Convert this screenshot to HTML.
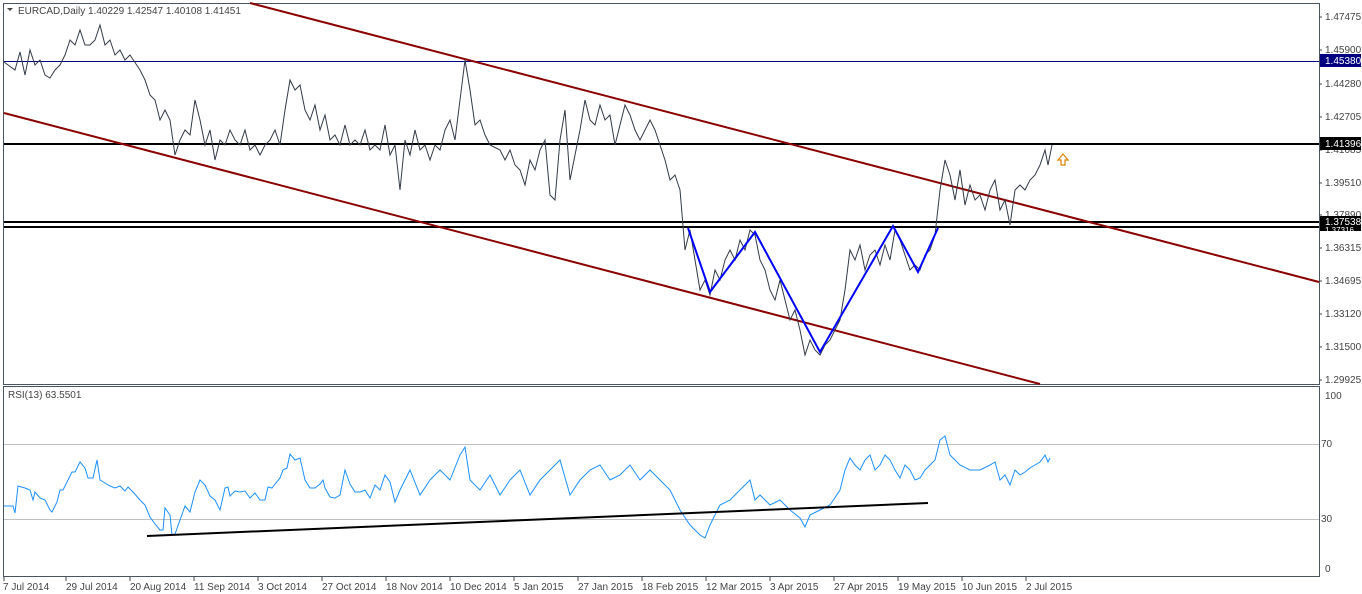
<!DOCTYPE html>
<html><head><meta charset="utf-8"><style>
html,body{margin:0;padding:0;background:#fff;width:1362px;height:594px;overflow:hidden}
svg{display:block}
text{font-family:"Liberation Sans",sans-serif;font-size:10px;fill:#444}
</style></head><body>
<svg width="1362" height="594" xmlns="http://www.w3.org/2000/svg">
<rect x="0" y="0" width="1362" height="594" fill="#fff"/>
<!-- frames -->
<rect x="3.5" y="3.5" width="1316" height="381" fill="none" stroke="#4a5560"/>
<rect x="3.5" y="386.5" width="1316" height="190" fill="none" stroke="#4a5560"/>
<!-- rsi levels -->
<line x1="4" y1="444.5" x2="1319" y2="444.5" stroke="#c0c0c0"/>
<line x1="4" y1="519.5" x2="1319" y2="519.5" stroke="#c0c0c0"/>
<!-- horizontal levels -->
<line x1="4" y1="61.5" x2="1319" y2="61.5" stroke="#000080"/>
<line x1="4" y1="144" x2="1319" y2="144" stroke="#000" stroke-width="2"/>
<line x1="4" y1="222" x2="1319" y2="222" stroke="#000" stroke-width="2"/>
<line x1="4" y1="227" x2="1319" y2="227" stroke="#000" stroke-width="2"/>
<!-- channel -->
<line x1="250" y1="3" x2="1319" y2="282" stroke="#8b0000" stroke-width="2"/>
<line x1="4" y1="113" x2="1040" y2="384" stroke="#8b0000" stroke-width="2"/>
<!-- price -->
<polyline fill="none" stroke="#333b48" stroke-width="1" points="4,62 15,70 20,52 25,75 30,50 35,65 40,60 45,75 50,78 55,70 60,65 65,55 70,40 75,45 80,30 85,45 90,45 95,40 100,25 105,45 110,40 115,55 120,50 125,60 130,55 140,70 145,80 150,95 155,100 160,120 165,110 170,120 175,155 180,140 185,130 190,135 195,100 200,120 205,145 210,130 215,160 220,140 225,145 230,130 235,140 240,145 245,130 250,150 255,145 260,155 265,145 270,140 275,130 280,145 285,110 290,80 295,90 300,85 305,110 310,120 315,105 320,130 325,115 330,140 335,135 340,145 345,125 350,145 355,140 360,145 365,130 370,150 375,145 380,150 385,125 390,155 395,145 400,190 405,140 410,155 415,130 420,150 425,145 430,160 435,145 440,150 445,130 450,120 455,140 460,100 465,60 470,90 475,125 480,120 485,135 490,145 500,150 505,160 510,150 515,165 520,170 525,185 530,160 535,170 540,150 545,140 550,195 555,200 560,140 565,110 570,180 575,155 580,130 585,100 590,120 595,125 600,105 605,120 610,115 615,145 620,125 625,105 630,115 635,130 640,140 645,130 650,120 655,130 660,145 665,160 670,180 675,175 680,190 685,250 690,230 695,260 700,290 705,280 710,295 715,270 720,280 725,260 730,250 735,260 740,240 745,250 750,230 755,235 760,260 765,270 770,290 775,300 780,280 785,300 790,320 795,310 800,330 805,355 810,340 815,350 820,355 825,345 830,340 835,330 840,320 845,290 850,250 855,260 860,245 865,270 870,255 875,250 880,265 885,245 890,260 895,230 900,240 905,255 910,270 915,265 920,270 925,255 930,250 935,235 940,190 945,160 950,175 955,200 960,170 965,205 970,185 975,200 980,195 985,210 990,190 995,180 1000,210 1005,200 1010,225 1015,190 1020,185 1025,190 1030,180 1035,175 1040,165 1045,150 1048,165 1052,145"/>
<!-- W pattern -->
<polyline fill="none" stroke="#0000ff" stroke-width="2" points="688,228 710,292 755,232 820,352 893,226 918,272 938,228"/>
<!-- arrow -->
<path d="M1063,154 l-5,6 h3 v5 h4 v-5 h3 z" fill="#fff" stroke="#e08000" stroke-width="1.2"/>
<!-- RSI -->
<polyline fill="none" stroke="#1e90ff" stroke-width="1" points="4,506 13,506 15,513 18,486 25,488 30,490 33,500 35,492 40,498 45,500 50,510 52,512 57,502 60,490 63,490 67,482 72,472 75,472 80,462 85,468 88,478 93,478 97,460 100,480 105,483 110,486 115,488 120,486 125,491 128,487 133,492 140,500 145,505 150,517 155,524 160,530 163,530 165,508 170,515 172,535 175,534 180,520 185,506 190,512 195,492 200,480 205,485 210,496 215,500 220,510 225,488 228,487 230,496 235,491 240,492 245,491 250,498 255,493 260,500 265,500 268,487 272,488 275,484 280,478 283,470 287,468 290,454 295,460 300,458 305,480 310,488 315,488 320,484 323,480 325,488 330,497 335,498 340,495 345,470 350,484 355,492 360,492 365,490 370,498 375,485 380,490 385,475 390,482 395,502 400,490 410,470 420,495 430,480 440,470 450,480 460,455 465,447 470,480 480,490 490,475 500,495 510,480 520,470 530,495 540,480 550,470 560,460 570,495 580,480 590,470 600,465 610,480 620,475 630,465 640,480 650,470 660,480 670,490 680,510 690,525 700,535 705,538 710,525 720,505 730,500 740,490 745,485 750,480 755,500 760,495 770,505 780,500 790,510 800,518 805,527 810,515 820,510 830,505 840,490 845,470 850,458 855,465 860,470 865,460 870,455 875,470 880,465 885,455 890,460 895,470 900,478 905,465 910,470 915,480 920,478 925,470 930,465 935,460 940,440 945,436 950,455 955,460 960,465 970,470 980,470 990,465 995,462 1000,480 1005,475 1010,485 1015,470 1020,475 1025,472 1030,468 1035,465 1040,462 1045,455 1048,462 1050,458"/>
<line x1="147" y1="536" x2="928" y2="503" stroke="#000" stroke-width="2"/>
<!-- titles -->
<path d="M7,8 h6 l-3,3 z" fill="#444"/>
<text x="18" y="14">EURCAD,Daily  1.40229 1.42547 1.40108 1.41451</text>
<text x="8" y="398">RSI(13) 63.5501</text>
<!-- price axis -->
<g>
<line x1="1319" y1="17" x2="1322" y2="17" stroke="#444"/><text x="1325" y="20">1.47475</text>
<line x1="1319" y1="50" x2="1322" y2="50" stroke="#444"/><text x="1325" y="53">1.45900</text>
<line x1="1319" y1="84" x2="1322" y2="84" stroke="#444"/><text x="1325" y="87">1.44280</text>
<line x1="1319" y1="117" x2="1322" y2="117" stroke="#444"/><text x="1325" y="120">1.42705</text>
<line x1="1319" y1="150" x2="1322" y2="150" stroke="#444"/><text x="1325" y="153">1.41085</text>
<line x1="1319" y1="183" x2="1322" y2="183" stroke="#444"/><text x="1325" y="186">1.39510</text>
<line x1="1319" y1="215" x2="1322" y2="215" stroke="#444"/><text x="1325" y="218">1.37890</text>
<line x1="1319" y1="248" x2="1322" y2="248" stroke="#444"/><text x="1325" y="251">1.36315</text>
<line x1="1319" y1="281" x2="1322" y2="281" stroke="#444"/><text x="1325" y="284">1.34695</text>
<line x1="1319" y1="314" x2="1322" y2="314" stroke="#444"/><text x="1325" y="317">1.33120</text>
<line x1="1319" y1="347" x2="1322" y2="347" stroke="#444"/><text x="1325" y="350">1.31500</text>
<line x1="1319" y1="380" x2="1322" y2="380" stroke="#444"/><text x="1325" y="383">1.29925</text>
<rect x="1320" y="54" width="41" height="13" fill="#000080"/><text x="1325" y="64" style="fill:#fff">1.45380</text>
<rect x="1320" y="137" width="41" height="13" fill="#000"/><text x="1325" y="147" style="fill:#fff">1.41396</text>
<rect x="1320" y="216" width="41" height="15" fill="#000"/><text x="1325" y="225" style="fill:#fff">1.37538</text><text x="1325" y="233" style="fill:#fff;font-size:8px">1.37316</text>
<text x="1325" y="399">100</text>
<text x="1321" y="447">70</text>
<text x="1321" y="522">30</text>
<text x="1325" y="572">0</text>
</g>
<!-- date axis -->
<g>
<text x="3" y="590">7 Jul 2014</text><line x1="4" y1="577" x2="4" y2="581" stroke="#444"/>
<text x="66" y="590">29 Jul 2014</text><line x1="66" y1="577" x2="66" y2="581" stroke="#444"/>
<text x="130" y="590">20 Aug 2014</text><line x1="130" y1="577" x2="130" y2="581" stroke="#444"/>
<text x="194" y="590">11 Sep 2014</text><line x1="194" y1="577" x2="194" y2="581" stroke="#444"/>
<text x="258" y="590">3 Oct 2014</text><line x1="258" y1="577" x2="258" y2="581" stroke="#444"/>
<text x="322" y="590">27 Oct 2014</text><line x1="322" y1="577" x2="322" y2="581" stroke="#444"/>
<text x="386" y="590">18 Nov 2014</text><line x1="386" y1="577" x2="386" y2="581" stroke="#444"/>
<text x="450" y="590">10 Dec 2014</text><line x1="450" y1="577" x2="450" y2="581" stroke="#444"/>
<text x="514" y="590">5 Jan 2015</text><line x1="514" y1="577" x2="514" y2="581" stroke="#444"/>
<text x="578" y="590">27 Jan 2015</text><line x1="578" y1="577" x2="578" y2="581" stroke="#444"/>
<text x="642" y="590">18 Feb 2015</text><line x1="642" y1="577" x2="642" y2="581" stroke="#444"/>
<text x="706" y="590">12 Mar 2015</text><line x1="706" y1="577" x2="706" y2="581" stroke="#444"/>
<text x="770" y="590">3 Apr 2015</text><line x1="770" y1="577" x2="770" y2="581" stroke="#444"/>
<text x="834" y="590">27 Apr 2015</text><line x1="834" y1="577" x2="834" y2="581" stroke="#444"/>
<text x="898" y="590">19 May 2015</text><line x1="898" y1="577" x2="898" y2="581" stroke="#444"/>
<text x="962" y="590">10 Jun 2015</text><line x1="962" y1="577" x2="962" y2="581" stroke="#444"/>
<text x="1026" y="590">2 Jul 2015</text><line x1="1026" y1="577" x2="1026" y2="581" stroke="#444"/>
</g>
</svg>
</body></html>
